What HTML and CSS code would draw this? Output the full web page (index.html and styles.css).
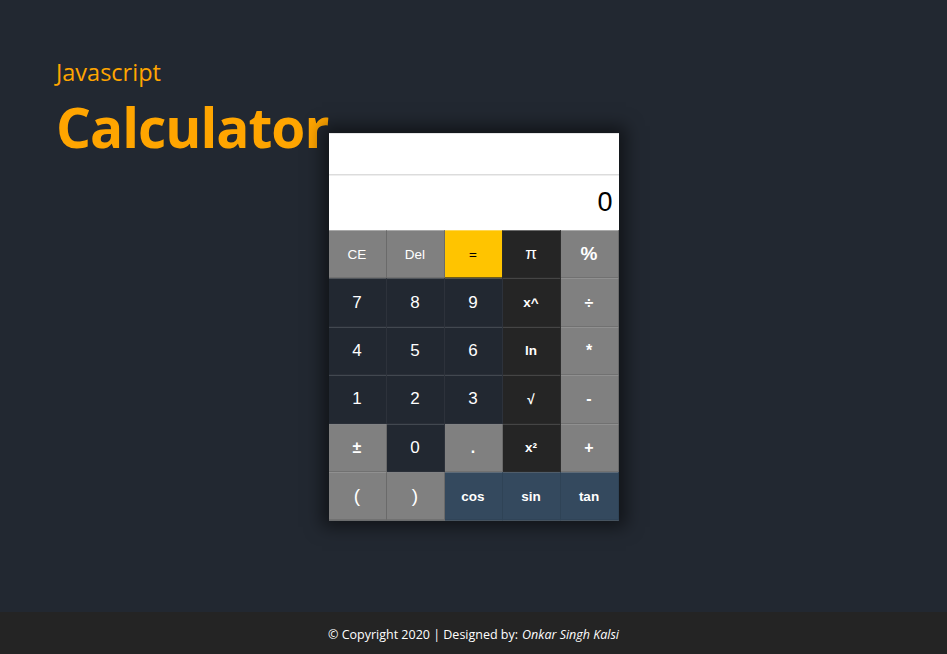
FILE: index.html
```html
<!DOCTYPE html>
<html>
<head>
<meta charset="utf-8">
<link rel="stylesheet" href="styles.css">
</head>
<body>
<header class="title">
  <p class="sub">Javascript</p>
  <h1 class="main">Calculator</h1>
</header>
<div class="calc">
  <div class="display">
    <div class="history"></div>
    <div class="result">0</div>
  </div>
  <div class="keys">
    <button class="k gray small">CE</button>
    <button class="k gray small">Del</button>
    <button class="k yellow small">=</button>
    <button class="k black">π</button>
    <button class="k gray big">%</button>

    <button class="k dark">7</button>
    <button class="k dark">8</button>
    <button class="k dark">9</button>
    <button class="k black fn">x^</button>
    <button class="k gray op">÷</button>

    <button class="k dark">4</button>
    <button class="k dark">5</button>
    <button class="k dark">6</button>
    <button class="k black fn">ln</button>
    <button class="k gray op">*</button>

    <button class="k dark">1</button>
    <button class="k dark">2</button>
    <button class="k dark">3</button>
    <button class="k black fn">√</button>
    <button class="k gray op">-</button>

    <button class="k gray op">±</button>
    <button class="k dark">0</button>
    <button class="k gray op">.</button>
    <button class="k black fn">x²</button>
    <button class="k gray op">+</button>

    <button class="k gray paren">(</button>
    <button class="k gray paren">)</button>
    <button class="k blue fn">cos</button>
    <button class="k blue fn">sin</button>
    <button class="k blue fn">tan</button>
  </div>
</div>
<footer class="foot">© Copyright 2020 | Designed by: <em>Onkar Singh Kalsi</em></footer>
</body>
</html>
```
FILE: styles.css
```css
html, body {
  margin: 0;
  padding: 0;
  height: 100%;
}
body {
  background: #222831;
  font-family: "Open Sans", "Noto Sans", sans-serif;
  position: relative;
  overflow: hidden;
}
.title {
  padding: 56px 0 0 56px;
  color: #ffa500;
}
.sub {
  margin: 0;
  font-size: 23.5px;
  font-weight: 400;
  line-height: 32px;
}
.main {
  margin: 4px 0 0;
  font-size: 55px;
  font-weight: 700;
  line-height: 70px;
  letter-spacing: -1px;
}
.calc {
  position: absolute;
  left: 50%;
  top: 50%;
  transform: translate(-50%, -50%);
  width: 290px;
  box-shadow: 0 0 16px 7px rgba(0, 0, 0, 0.5);
  background: #fff;
}
.display {
  background: #fff;
  font-family: "Liberation Sans", Arial, sans-serif;
}
.history {
  height: 41px;
  border-bottom: 1px solid #ccc;
}
.result {
  height: 55px;
  display: flex;
  align-items: center;
  justify-content: flex-end;
  padding-right: 6px;
  font-size: 27px;
  color: #000;
}
.keys {
  display: grid;
  grid-template-columns: repeat(5, 58px);
  grid-auto-rows: 48.4px;
}
.k {
  margin: 0;
  border-style: solid;
  border-width: 0 1px 1px 0;
  font-family: "Liberation Sans", Arial, sans-serif;
  font-size: 17px;
  color: #fff;
  padding: 1px 0 0;
  display: flex;
  align-items: center;
  justify-content: center;
}
.small {
  font-size: 13.5px;
}
.fn {
  font-size: 13.5px;
  font-weight: 700;
}
.op {
  font-size: 16px;
  font-weight: 700;
}
.paren {
  font-size: 19px;
}
.big {
  font-size: 19px;
  font-weight: 700;
}
.gray {
  background: #808080;
  border-color: #6a6a6a;
}
.dark {
  background: #222831;
  border-color: #2d323b;
}
.black {
  background: #252525;
  border-color: #2d2d2d;
}
.yellow {
  background: #ffc400;
  color: #000;
  border-color: #2a2a2a;
}
.blue {
  background: #34495e;
  border-color: #2f4356;
}
.foot {
  position: absolute;
  left: 0;
  right: 0;
  bottom: 0;
  height: 42px;
  padding-top: 3px;
  box-sizing: border-box;
  background: #242424;
  color: #fff;
  font-size: 12.5px;
  display: flex;
  align-items: center;
  justify-content: center;
}
.foot em {
  margin-left: 4px;
}
```
